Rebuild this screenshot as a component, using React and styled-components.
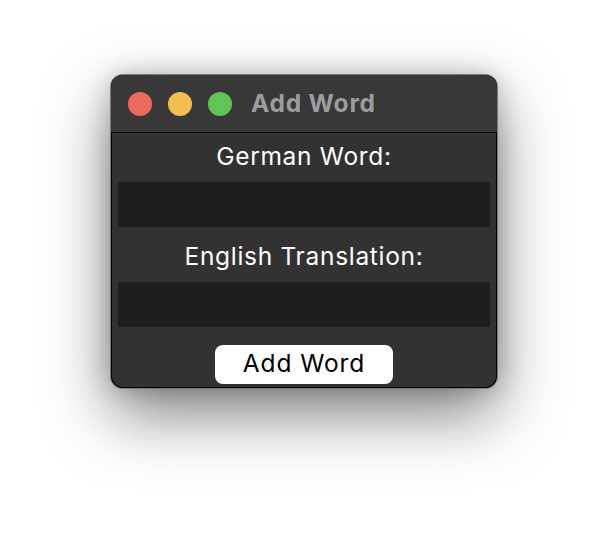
import React from 'react';
import styled, { createGlobalStyle } from 'styled-components';

const Global = createGlobalStyle`
  html, body {
    margin: 0;
    background: #ffffff;
  }
  body {
    font-family: Inter, "Liberation Sans", sans-serif;
  }
`;

const Page = styled.div`
  width: 608px;
  height: 536px;
  display: flex;
  justify-content: center;
  align-items: flex-start;
  padding-top: 75px;
  box-sizing: border-box;
`;

const Window = styled.div`
  width: 386px;
  border-radius: 12px;
  overflow: hidden;
  background: #323232;
  box-shadow:
    0 0 0 1px #000000 inset,
    0 0 0 1px #7a7a7a,
    0 26px 64px rgba(0, 0, 0, 0.5),
    0 0 24px rgba(0, 0, 0, 0.22);
  display: flex;
  flex-direction: column;
`;

const TitleBar = styled.div`
  height: 57px;
  background: #383838;
  border-bottom: 1px solid #111111;
  display: flex;
  align-items: center;
  padding-left: 17px;
  gap: 16px;
`;

const Light = styled.span`
  width: 24px;
  height: 24px;
  border-radius: 50%;
  background: ${(p) => p.$color};
  flex-shrink: 0;
`;

const Title = styled.div`
  margin-left: 3px;
  padding-bottom: 2px;
  font-size: 24.5px;
  font-weight: 700;
  color: #9d9d9d;
  letter-spacing: 0.8px;
`;

const Body = styled.div`
  display: flex;
  flex-direction: column;
  align-items: stretch;
  padding: 0 7px 4px;
`;

const Label = styled.div`
  color: #ffffff;
  font-size: 24.5px;
  letter-spacing: 0.7px;
  text-align: center;
  height: 49px;
  line-height: 47px;
`;

const Input = styled.div`
  height: 45px;
  background: #1e1e1e;
  margin-bottom: 6px;
`;

const Button = styled.button`
  align-self: center;
  margin-top: 12px;
  width: 178px;
  height: 39px;
  border: none;
  border-radius: 8px;
  background: #ffffff;
  color: #000000;
  font-family: Inter, "Liberation Sans", sans-serif;
  font-size: 24.5px;
  letter-spacing: 0.9px;
  padding: 0 0 3px;
`;

export default function App() {
  return (
    <>
      <Global />
      <Page>
        <Window>
          <TitleBar>
            <Light $color="#ee6a5e" />
            <Light $color="#f5bf4f" />
            <Light $color="#61c554" />
            <Title>Add Word</Title>
          </TitleBar>
          <Body>
            <Label>German Word:</Label>
            <Input />
            <Label>English Translation:</Label>
            <Input />
            <Button>Add Word</Button>
          </Body>
        </Window>
      </Page>
    </>
  );
}
